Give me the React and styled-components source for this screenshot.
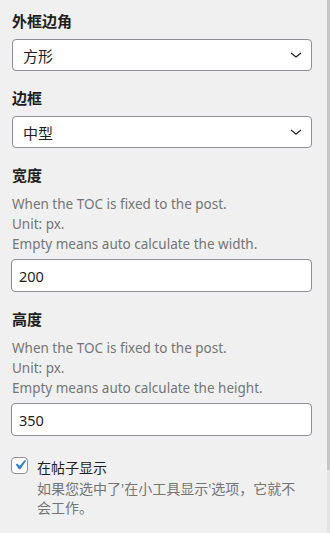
import React from 'react';
import styled, { createGlobalStyle } from 'styled-components';

const GlobalStyle = createGlobalStyle`
  html, body {
    margin: 0;
    padding: 0;
    background: #f0f0f0;
  }
  body {
    font-family: "Noto Sans", "Noto Sans CJK SC", sans-serif;
    color: #1e1e1e;
  }
`;

const Frame = styled.div`
  display: flex;
  width: 330px;
  height: 533px;
  overflow: hidden;
`;

const Panel = styled.div`
  flex: 1;
  display: flex;
  flex-direction: column;
  padding: 11px 15px 0 12px;
`;

const ScrollTrack = styled.div`
  width: 3px;
  display: flex;
  flex-direction: column;
  background: #e4e4e4;
`;

const ScrollThumb = styled.div`
  height: 470px;
  background: #c6c6c6;
`;

const Field = styled.div`
  display: flex;
  flex-direction: column;
  margin-bottom: ${(p) => p.$gap || 16}px;
`;

const Label = styled.div`
  font-size: 15px;
  font-weight: 600;
  line-height: 20px;
  margin-bottom: ${(p) => p.$mb || 8}px;
`;

const Help = styled.div`
  font-size: 13.5px;
  line-height: 20px;
  color: #757575;
`;

const HelpBlock = styled.div`
  display: flex;
  flex-direction: column;
  margin-bottom: 5px;
`;

const SelectBox = styled.div`
  display: flex;
  align-items: center;
  justify-content: space-between;
  height: 32px;
  box-sizing: border-box;
  padding: 0 8px 0 10px;
  background: #fff;
  border: 1px solid #8c8f94;
  border-radius: 4px;
  font-size: 15px;
`;

const TextBox = styled.div`
  display: flex;
  align-items: center;
  height: 33px;
  box-sizing: border-box;
  padding: 0 7px;
  background: #fff;
  border: 1px solid #8c8f94;
  border-radius: 4px;
  font-size: 14.5px;
  margin-left: -1px;
`;

const CheckRow = styled.div`
  display: flex;
  align-items: flex-start;
  gap: 9px;
  margin-left: -1px;
`;

const CheckBox = styled.span`
  flex: 0 0 auto;
  width: 17px;
  height: 17px;
  box-sizing: border-box;
  border: 1px solid #8c8f94;
  border-radius: 4px;
  background: #fff;
  display: flex;
  align-items: center;
  justify-content: center;
  overflow: visible;
`;

const CheckText = styled.div`
  display: flex;
  flex-direction: column;
  max-width: 268px;
  padding-top: 1px;
`;

const CheckLabel = styled.div`
  font-size: 14px;
  line-height: 20px;
  color: #1e1e1e;
`;

const CheckHelp = styled.div`
  font-size: 14px;
  line-height: 19px;
  color: #757575;
  margin-top: 1px;
`;

const Chevron = () => (
  <svg width="14" height="14" viewBox="0 0 24 24" fill="none">
    <path d="M4 9l8 6.5 8-6.5" stroke="#1e1e1e" strokeWidth="2" strokeLinecap="round" strokeLinejoin="round" />
  </svg>
);

const Tick = () => (
  <svg width="20" height="20" viewBox="0 0 20 20" style={{ margin: '-2px -3px 0 -2px', flex: '0 0 auto' }}>
    <path d="M14.83 4.89l1.34.94-5.81 8.38H9.02L5.78 9.67l1.34-1.25 2.57 2.4z" fill="#3582c4" />
  </svg>
);

const Select = ({ value }) => (
  <SelectBox>
    <span>{value}</span>
    <Chevron />
  </SelectBox>
);

export default function App() {
  return (
    <>
      <GlobalStyle />
      <Frame>
        <Panel>
          <Field $gap={17}>
            <Label>外框边角</Label>
            <Select value="方形" />
          </Field>
          <Field $gap={17}>
            <Label>边框</Label>
            <Select value="中型" />
          </Field>
          <Field $gap={17}>
            <Label $mb={9}>宽度</Label>
            <HelpBlock>
              <Help>When the TOC is fixed to the post.</Help>
              <Help>Unit: px.</Help>
              <Help>Empty means auto calculate the width.</Help>
            </HelpBlock>
            <TextBox>200</TextBox>
          </Field>
          <Field $gap={21}>
            <Label $mb={9}>高度</Label>
            <HelpBlock>
              <Help>When the TOC is fixed to the post.</Help>
              <Help>Unit: px.</Help>
              <Help>Empty means auto calculate the height.</Help>
            </HelpBlock>
            <TextBox>350</TextBox>
          </Field>
          <CheckRow>
            <CheckBox>
              <Tick />
            </CheckBox>
            <CheckText>
              <CheckLabel>在帖子显示</CheckLabel>
              <CheckHelp>如果您选中了'在小工具显示'选项，它就不会工作。</CheckHelp>
            </CheckText>
          </CheckRow>
        </Panel>
        <ScrollTrack>
          <ScrollThumb />
        </ScrollTrack>
      </Frame>
    </>
  );
}
